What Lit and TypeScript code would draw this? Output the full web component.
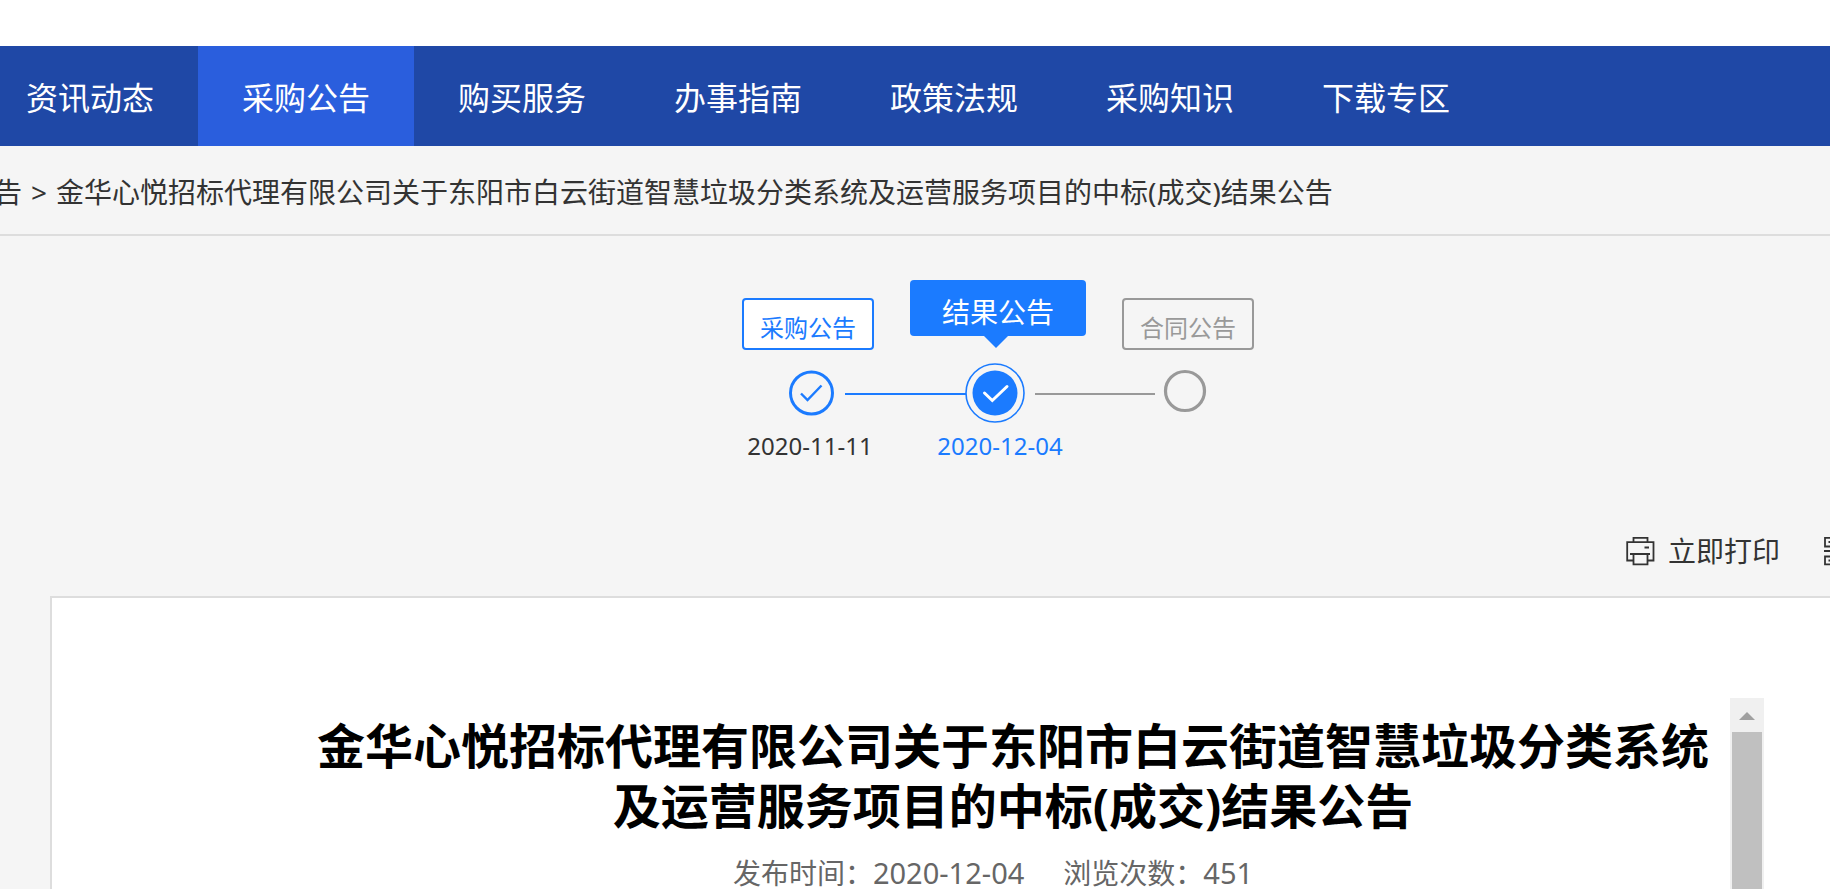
import { LitElement, html, css } from "lit";
import { customElement } from "lit/decorators.js";
import { classMap } from "lit/directives/class-map.js";

const NAV = ["资讯动态", "采购公告", "购买服务", "办事指南", "政策法规", "采购知识", "下载专区"];
const TITLE = "金华心悦招标代理有限公司关于东阳市白云街道智慧垃圾分类系统及运营服务项目的中标(成交)结果公告";

@customElement("site-nav")
class SiteNav extends LitElement {
  static styles = css`
    :host { display: block; background: #1f48a6; overflow: hidden; }
    .list { display: flex; margin-left: -18px; }
    .item {
      flex: none; padding: 4px 44px 0; font-size: 32px; line-height: 96px;
      color: #fff; text-decoration: none;
    }
    .active { background: #2a5edd; }
  `;
  render() {
    return html`<nav class="list">
      ${NAV.map((n) => html`<a href="#" class=${classMap({ item: true, active: n === "采购公告" })}>${n}</a>`)}
    </nav>`;
  }
}

@customElement("notice-steps")
class NoticeSteps extends LitElement {
  static styles = css`
    :host { display: flex; flex-direction: column; align-items: center; }
    .labels { display: flex; align-items: flex-end; gap: 36px; }
    .label {
      box-sizing: border-box; margin: 18px 0 0; padding: 8px 16px 0; height: 52px;
      border: 2px solid #999; border-radius: 4px; background: none;
      font: inherit; font-size: 24px; line-height: 40px; color: #999;
    }
    .done { border-color: #1b7bff; background: #fff; color: #1b7bff; }
    .current {
      position: relative; align-self: flex-start; margin: 0; padding: 8px 32px 0; height: 56px; border: 0;
      background: #1b7bff; color: #fff; font-size: 28px; line-height: 48px;
    }
    .current::after {
      content: ""; position: absolute; top: 100%; left: 50%; margin-left: -14px;
      border: 12px solid transparent; border-top-color: #1b7bff; border-bottom: 0;
    }
    .rail { display: block; width: 418px; height: 62px; margin-top: 12px; }
    .dates { display: grid; grid-template-columns: repeat(3, 190px); margin-top: 6px; padding-left: 4px; }
    .date { text-align: center; font-size: 24px; line-height: 32px; color: #333; }
    .on { color: #1b7bff; }
  `;
  render() {
    return html`
      <div class="labels">
        <button class="label done">采购公告</button>
        <button class="label current">结果公告</button>
        <button class="label">合同公告</button>
      </div>
      <svg class="rail" viewBox="0 0 418 62" fill="none" aria-hidden="true">
        <path d="M56 32H177" stroke="#1b7bff" stroke-width="2" />
        <path d="M246 32H366" stroke="#999" stroke-width="2" />
        <circle cx="22.500" cy="31" r="21" stroke="#1b7bff" stroke-width="3" />
        <path d="M12 31.500l6.500 6.500L32.500 23.500" stroke="#1b7bff" stroke-width="2.400" />
        <circle cx="206" cy="31" r="29" stroke="#1b7bff" stroke-width="1.600" />
        <circle cx="206" cy="31" r="22.500" fill="#1b7bff" />
        <path d="M195.500 31l7.800 7.500L218 24.500" stroke="#fff" stroke-width="3" stroke-linecap="round" />
        <circle cx="396" cy="29" r="19.500" stroke="#999" stroke-width="3.200" />
      </svg>
      <div class="dates">
        <span class="date">2020-11-11</span>
        <span class="date on">2020-12-04</span>
      </div>
    `;
  }
}

@customElement("app-root")
class AppRoot extends LitElement {
  static styles = css`
    :host {
      display: flex; flex-direction: column; min-height: 100vh; overflow: hidden; background: #f5f5f5;
      font-family: "Noto Sans", "Noto Sans CJK SC", sans-serif; color: #333;
    }
    .top { height: 46px; background: #fff; }
    .crumbs {
      display: flex; gap: 9px; padding: 4px 0 0; border-bottom: 2px solid #ddd;
      font-size: 28px; line-height: 84px; white-space: nowrap;
    }
    .crumb { color: inherit; text-decoration: none; margin-left: -6px; }
    .page { display: flex; flex-direction: column; flex: 1; margin: 0 -116px 0 50px; }
    .steps { padding-top: 44px; }
    .tools { display: flex; justify-content: flex-end; gap: 44px; padding: 68px 93px 24px 0; }
    .tool {
      display: flex; align-items: center; gap: 13px; padding: 0; border: 0; background: none;
      font: inherit; font-size: 28px; line-height: 42px; color: #333;
    }
    .icon { width: 29px; height: 30px; flex: none; }
    .card { flex: 1; display: flex; padding: 100px 180px 0; border: 2px solid #ddd; border-bottom: 0; background: #fff; }
    .article { flex: 1; text-align: center; }
    .title { margin: 0; padding: 18px 0 0 64px; font-size: 48px; line-height: 60px; font-weight: 700; color: #000; }
    .meta { display: flex; justify-content: center; gap: 39px; padding: 16px 0 0 24px; font-size: 28px; line-height: 42px; color: #666; }
    .value { font-size: 29px; }
    .bar { width: 34px; flex: none; display: flex; flex-direction: column; background: #f0f0f0; }
    .arrow { width: 34px; height: 34px; }
    .thumb { flex: 1; margin: 0 2px; background: #c0c0c0; }
  `;
  render() {
    return html`
      <div class="top"></div>
      <site-nav></site-nav>
      <div class="crumbs">
        <a href="#" class="crumb">告</a><span>&gt;</span><span>${TITLE}</span>
      </div>
      <main class="page">
        <notice-steps class="steps"></notice-steps>
        <div class="tools">
          <button class="tool">
            <svg class="icon" viewBox="0 0 29 30" fill="none" stroke="#333" stroke-width="1.800" aria-hidden="true">
              <path d="M7.500 6V1.800H21.500V6M7 24.500H1.200V6.200H27.500V24.500H22M4 18H24M7.500 18V28.300H21.500V18M18.500 11.500H23" />
            </svg>
            立即打印
          </button>
          <button class="tool">
            <svg class="icon" viewBox="0 0 29 30" fill="none" stroke="#333" stroke-width="1.800" aria-hidden="true">
              <path d="M1 1.800H11V10.500H1ZM18 1.800H28V10.500H18ZM1 20.500H11V28.300H1ZM0 15H28M4.500 6H7M4.500 24.500H7M18 20H28M18 28H28" />
            </svg>
          </button>
        </div>
        <section class="card">
          <article class="article">
            <h1 class="title">${TITLE}</h1>
            <div class="meta">
              <span>发布时间：<span class="value">2020-12-04</span></span>
              <span>浏览次数：<span class="value">451</span></span>
            </div>
          </article>
          <div class="bar" aria-hidden="true">
            <svg class="arrow" viewBox="0 0 34 34"><path d="M9 22L17 14L25 22Z" fill="#a0a0a0" /></svg>
            <div class="thumb"></div>
          </div>
        </section>
      </main>
    `;
  }
}
